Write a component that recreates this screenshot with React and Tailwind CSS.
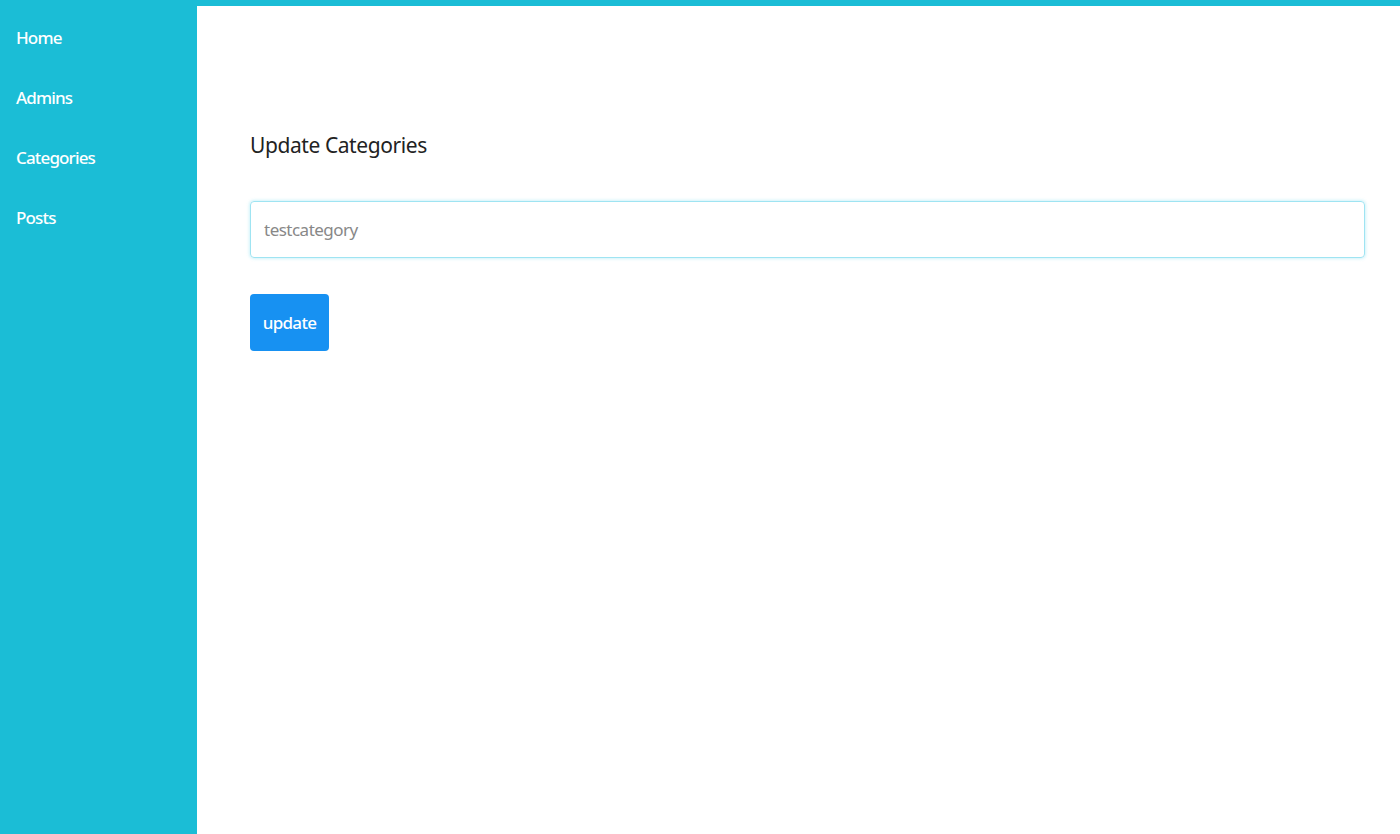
import React from "react";

const links = ["Home", "Admins", "Categories", "Posts"];

const App = () => {
  return (
    <div className="flex h-[834px] w-full bg-white" style={{ fontFamily: "'Noto Sans', 'Open Sans', sans-serif" }}>
      <aside className="w-[197px] shrink-0 bg-[#1bbdd6] pt-[24px] pl-[16px]">
        <ul className="flex flex-col gap-[32px]">
          {links.map((l) => (
            <li key={l}>
              <a href="#" className="block text-[17px] font-medium leading-[28px] tracking-[-0.05em] text-white">
                {l}
              </a>
            </li>
          ))}
        </ul>
      </aside>
      <main className="flex-1 flex flex-col">
        <div className="h-[6px] bg-[#1bbdd6]" />
        <div className="pl-[53px] pr-[35px] pt-[123px]">
          <h2 className="text-[21px] leading-[32px] tracking-[-0.02em] text-[#222]">Update Categories</h2>
          <input
            type="text"
            placeholder="testcategory"
            className="mt-[40px] block h-[57px] w-full rounded-[4px] border border-[#9fe4f2] px-[13px] text-[17px] tracking-[-0.03em] text-[#555] placeholder:text-[#888] outline-none shadow-[0_0_3px_1px_rgba(120,220,240,0.35)]"
          />
          <button className="mt-[36px] h-[57px] w-[79px] rounded-[4px] bg-[#1791f2] text-[17px] font-medium tracking-[-0.04em] text-white">
            update
          </button>
        </div>
      </main>
    </div>
  );
};

export default App;
